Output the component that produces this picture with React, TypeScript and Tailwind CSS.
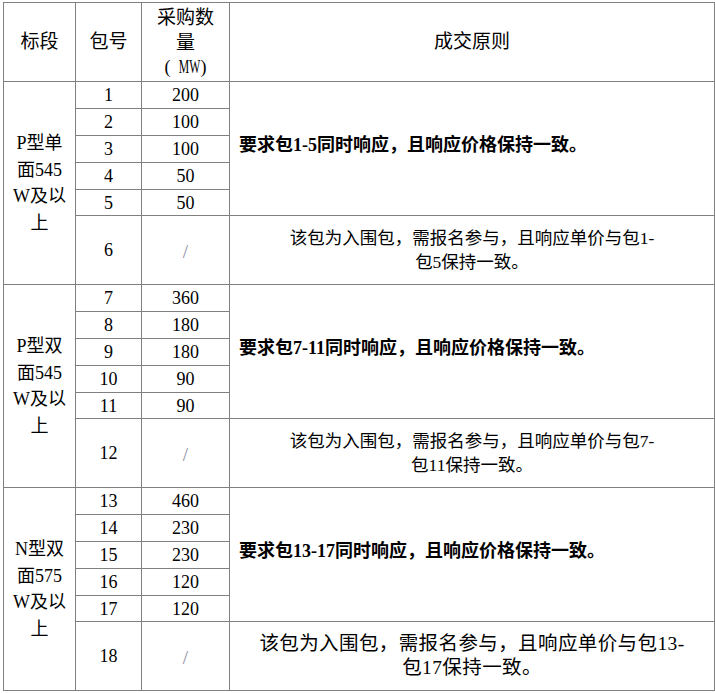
const font = { fontFamily: '"Liberation Serif", "Noto Sans CJK SC", serif' };

type Group = {
  label: string[];
  rows: [number, number][];
  rule: string;
  last: number;
  note: string[];
  noteClass: string;
};

const groups: Group[] = [
  {
    label: ["P型单", "面545", "W及以", "上"],
    rows: [[1, 200], [2, 100], [3, 100], [4, 50], [5, 50]],
    rule: "要求包1-5同时响应，且响应价格保持一致。",
    last: 6,
    note: ["该包为入围包，需报名参与，且响应单价与包1-", "包5保持一致。"],
    noteClass: "text-[17.5px]",
  },
  {
    label: ["P型双", "面545", "W及以", "上"],
    rows: [[7, 360], [8, 180], [9, 180], [10, 90], [11, 90]],
    rule: "要求包7-11同时响应，且响应价格保持一致。",
    last: 12,
    note: ["该包为入围包，需报名参与，且响应单价与包7-", "包11保持一致。"],
    noteClass: "text-[17.5px]",
  },
  {
    label: ["N型双", "面575", "W及以", "上"],
    rows: [[13, 460], [14, 230], [15, 230], [16, 120], [17, 120]],
    rule: "要求包13-17同时响应，且响应价格保持一致。",
    last: 18,
    note: ["该包为入围包，需报名参与，且响应单价与包13-", "包17保持一致。"],
    noteClass: "text-[19.5px] tracking-[0.4px]",
  },
];

const cell = "border border-[#808080] p-0";

export default function App() {
  return (
    <div className="bg-white w-[715px] h-[693px] pl-[3px] pt-[2px] text-black" style={font}>
      <table className="table-fixed border-collapse w-[711px] border-[1.5px] border-[#808080]">
        <colgroup>
          <col className="w-[72px]" />
          <col className="w-[66px]" />
          <col className="w-[88px]" />
          <col className="w-[485px]" />
        </colgroup>
        <thead>
          <tr className="h-[79px]">
            <th className={`${cell} font-normal text-[19px] text-center align-middle`}>标段</th>
            <th className={`${cell} font-normal text-[19px] text-center align-middle`}>包号</th>
            <th className={`${cell} font-normal text-center align-middle`}>
              <div className="text-[19px] leading-[25px]">采购数</div>
              <div className="text-[19px] leading-[25px]">量</div>
              <div className="text-[18px] leading-[25px] flex justify-center items-center gap-[4px]">
                <span>(</span>
                <span className="inline-block w-[22px] scale-x-[0.65]">MW</span>
                <span>)</span>
              </div>
            </th>
            <th className={`${cell} font-normal text-[19px] text-center align-middle`}>成交原则</th>
          </tr>
        </thead>
        <tbody>
          {groups.map((g) => (
            <>
              {g.rows.map(([no, mw], i) => (
                <tr key={no} className={i === 4 ? "h-[26px]" : "h-[27px]"}>
                  {i === 0 && (
                    <td rowSpan={6} className={`${cell} text-center align-middle text-[18px] leading-[26.5px]`}>
                      {g.label.map((l) => (
                        <div key={l}>{l}</div>
                      ))}
                    </td>
                  )}
                  <td className={`${cell} text-center align-middle text-[18px] leading-none`}>{no}</td>
                  <td className={`${cell} text-center align-middle text-[18px] leading-none`}>{mw}</td>
                  {i === 0 && (
                    <td rowSpan={5} className={`${cell} align-middle pl-[9px] text-[18px] font-bold leading-none pb-[8px]`}>
                      {g.rule}
                    </td>
                  )}
                </tr>
              ))}
              <tr key={g.last} className="h-[69px]">
                <td className={`${cell} text-center align-middle text-[18px]`}>{g.last}</td>
                <td className={`${cell} text-center align-middle text-[19px] text-[#8c8ca0] pt-[4px]`}>/</td>
                <td className={`${cell} text-center align-middle leading-[24px] ${g.noteClass}`}>
                  {g.note.map((l) => (
                    <div key={l}>{l}</div>
                  ))}
                </td>
              </tr>
            </>
          ))}
        </tbody>
      </table>
    </div>
  );
}
